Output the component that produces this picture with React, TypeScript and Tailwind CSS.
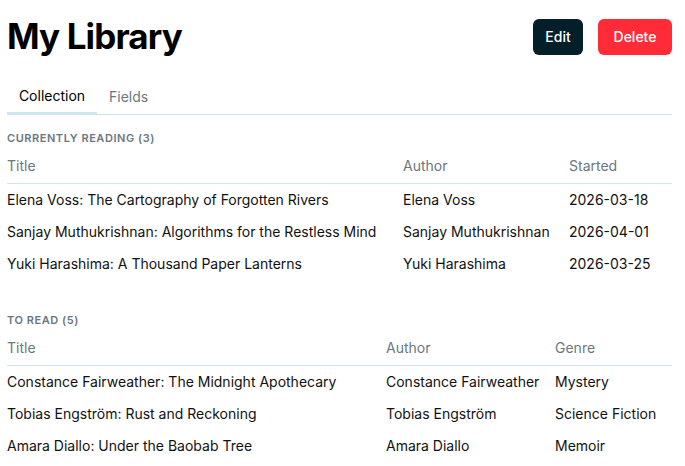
import React from "react";

const reading = [
  ["Elena Voss: The Cartography of Forgotten Rivers", "Elena Voss", "2026-03-18"],
  ["Sanjay Muthukrishnan: Algorithms for the Restless Mind", "Sanjay Muthukrishnan", "2026-04-01"],
  ["Yuki Harashima: A Thousand Paper Lanterns", "Yuki Harashima", "2026-03-25"],
];

const toRead = [
  ["Constance Fairweather: The Midnight Apothecary", "Constance Fairweather", "Mystery"],
  ["Tobias Engström: Rust and Reckoning", "Tobias Engström", "Science Fiction"],
  ["Amara Diallo: Under the Baobab Tree", "Amara Diallo", "Memoir"],
];

function Section({
  label,
  cols,
  widths,
  rows,
}: {
  label: string;
  cols: string[];
  widths: string[];
  rows: string[][];
}) {
  return (
    <div>
      <div className="text-[11px] font-semibold tracking-wider text-[#6b7780] uppercase h-[22px] leading-[22px]">
        {label}
      </div>
      <div className="flex text-sm text-[#6b7780] h-[35px] items-center border-b border-[#cfe6ee]">
        {cols.map((c, i) => (
          <div key={c} className={widths[i]}>
            {c}
          </div>
        ))}
      </div>
      {rows.map((r, ri) => (
        <div key={ri} className="flex text-sm text-[#111] h-[32px] items-center">
          {r.map((c, i) => (
            <div key={i} className={widths[i]}>
              {c}
            </div>
          ))}
        </div>
      ))}
    </div>
  );
}

export default function App() {
  return (
    <div className="px-[7px] pr-[13px] pt-[14px] bg-white min-h-screen" style={{ fontFamily: "Inter, sans-serif" }}>
      <div className="flex items-center justify-between h-[44px]">
        <h1 className="text-[35px] font-bold tracking-tight text-black">My Library</h1>
        <div className="flex gap-[15px] mt-[2px]">
          <button className="h-[36px] w-[50px] rounded-md bg-[#03202a] text-white text-sm font-medium">Edit</button>
          <button className="h-[36px] w-[74px] rounded-md bg-[#ff2b36] text-white text-sm font-medium">Delete</button>
        </div>
      </div>
      <div className="flex mt-[22px] border-b border-[#cfe6ee] text-sm h-[35px]">
        <div className="w-[90px] flex items-center justify-center border-b-[3px] border-[#cfe6ee] text-black -mb-px">Collection</div>
        <div className="px-3 flex items-center text-[#6b7780]">Fields</div>
      </div>
      <div className="mt-[12px]">
        <Section
          label="Currently Reading (3)"
          cols={["Title", "Author", "Started"]}
          widths={["w-[396px]", "w-[166px]", "flex-1"]}
          rows={reading}
        />
      </div>
      <div className="mt-[29px]">
        <Section
          label="To Read (5)"
          cols={["Title", "Author", "Genre"]}
          widths={["w-[379px]", "w-[169px]", "flex-1"]}
          rows={toRead}
        />
      </div>
    </div>
  );
}
